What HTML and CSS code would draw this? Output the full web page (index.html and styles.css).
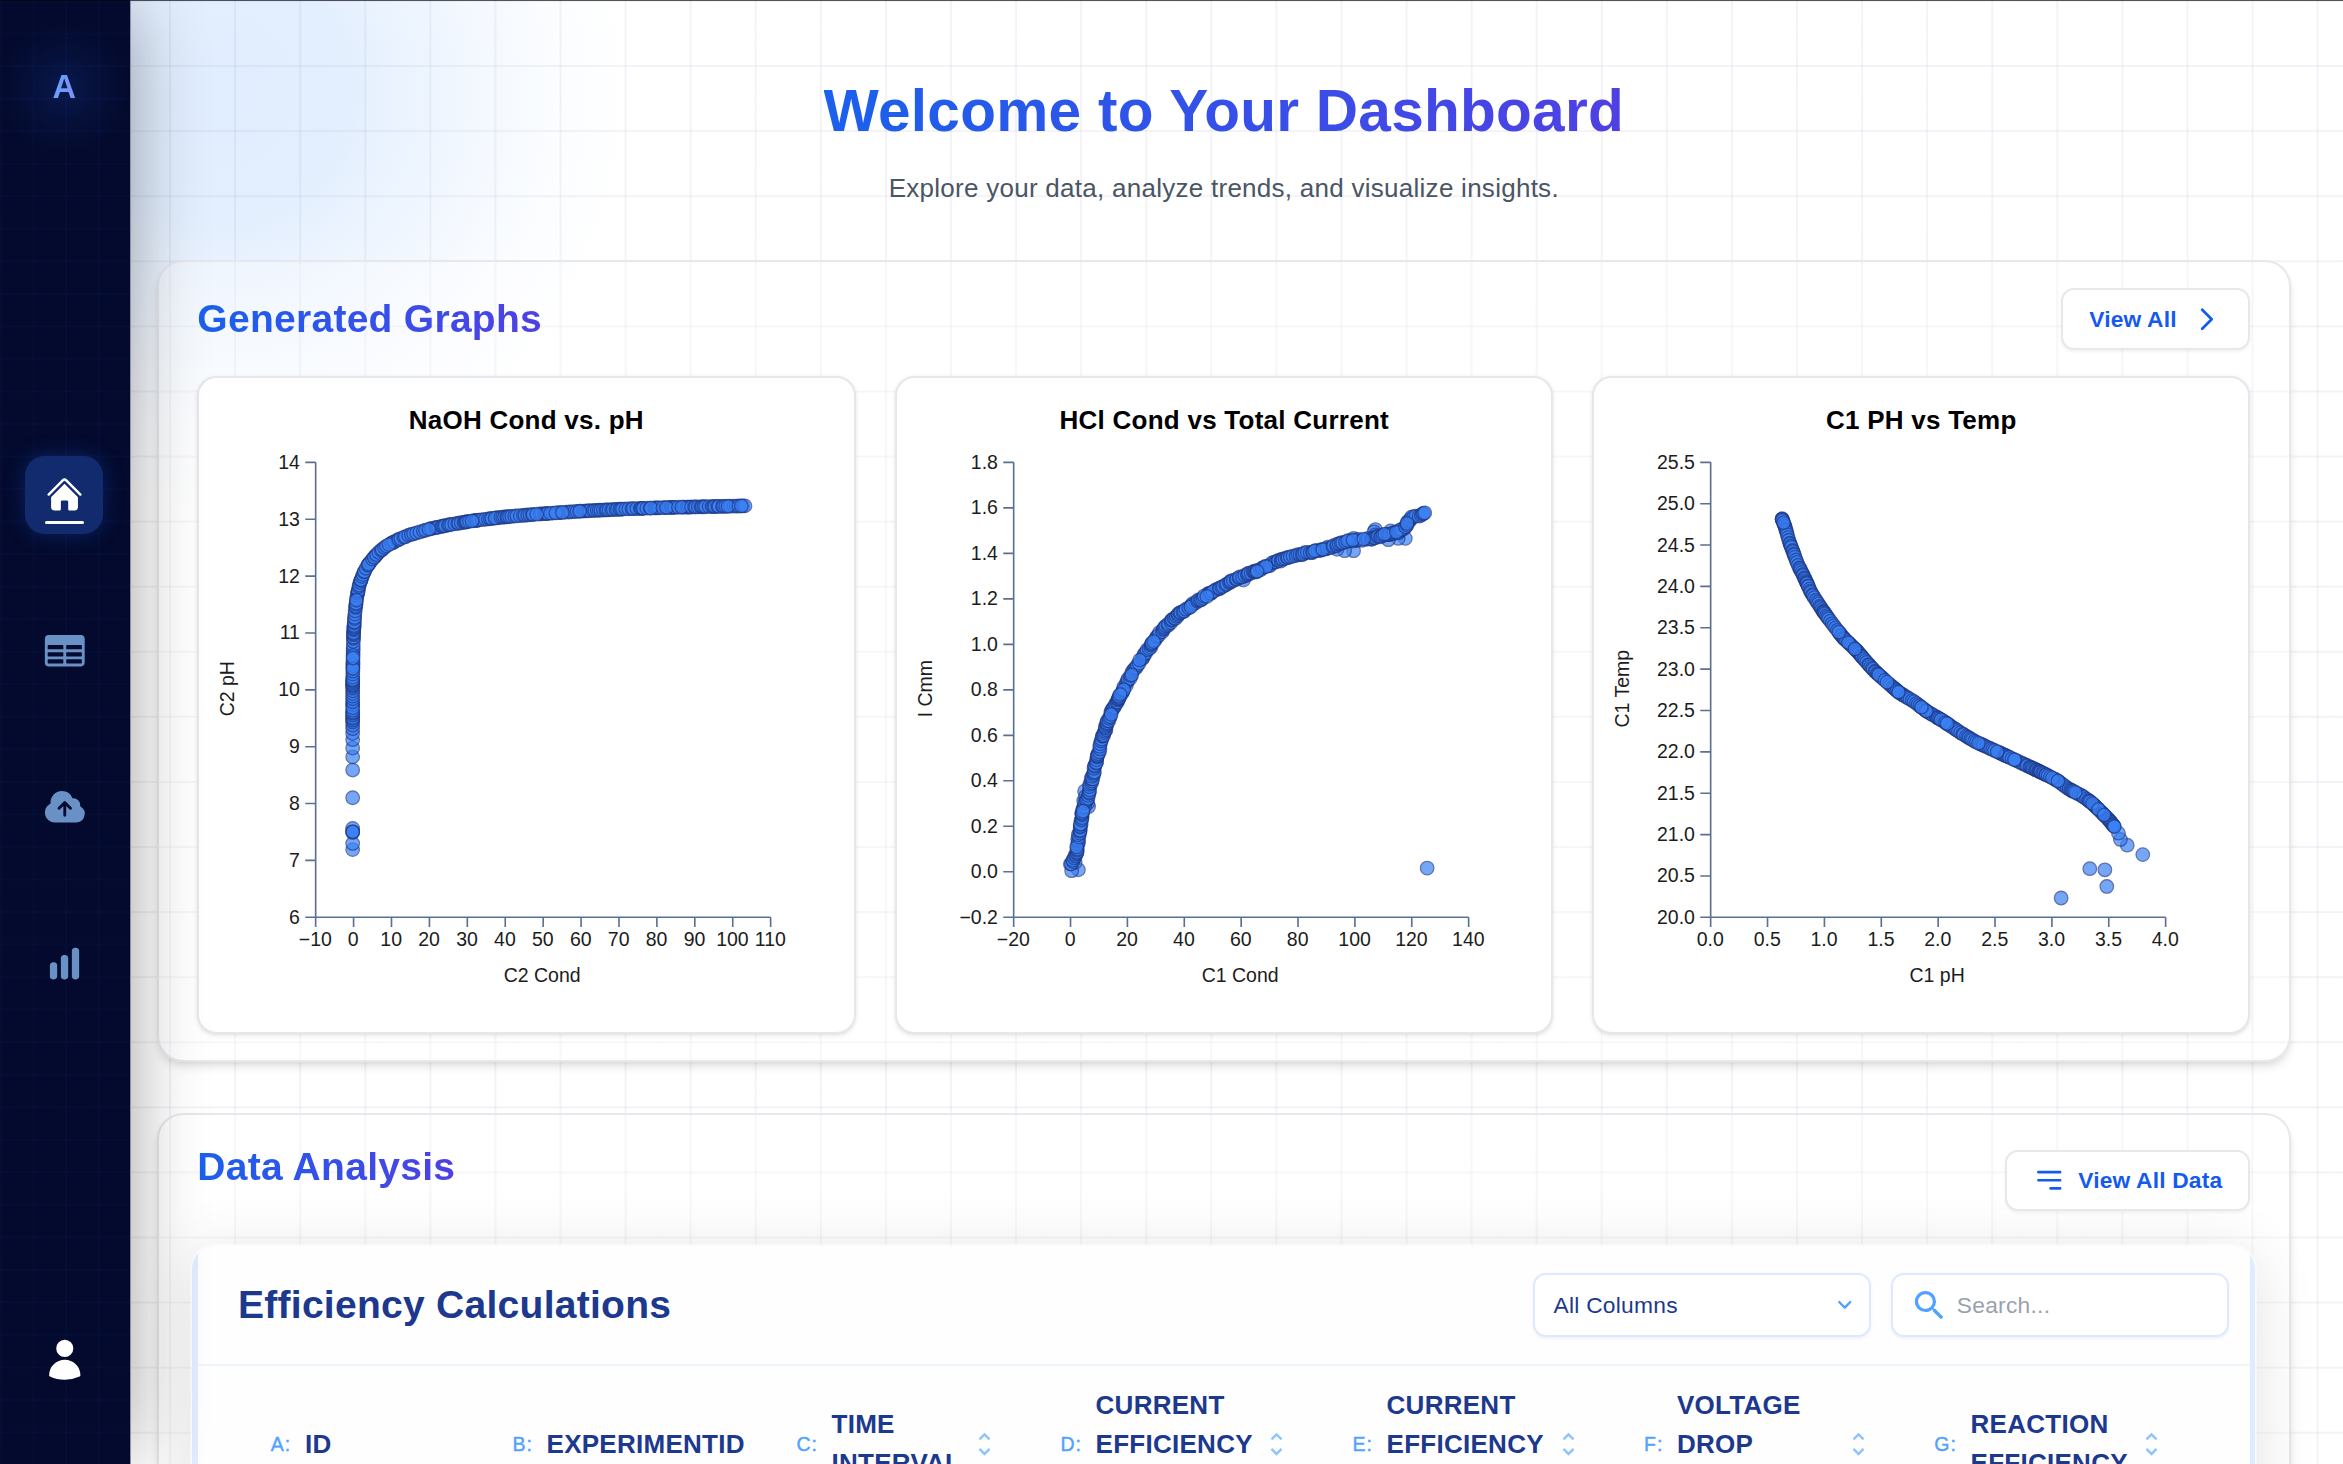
FILE: index.html
```html
<!DOCTYPE html>
<html lang="en">
<head>
<meta charset="utf-8">
<title>Dashboard</title>
<link rel="stylesheet" href="styles.css">
</head>
<body>
<div class="app">
  <aside class="sidebar">
    <div class="logo"><span>A</span></div>
    <nav class="nav">
      <a class="nav-item active">
        <svg width="24" height="24" viewBox="0 0 24 24" fill="currentColor"><path d="M11.47 3.841a.75.75 0 0 1 1.06 0l8.69 8.69a.75.75 0 1 0 1.06-1.061l-8.689-8.69a2.25 2.25 0 0 0-3.182 0l-8.69 8.69a.75.75 0 1 0 1.061 1.06l8.69-8.689Z"/><path d="m12 5.432 8.159 8.159c.03.03.06.058.091.086v6.198c0 1.035-.84 1.875-1.875 1.875H15a.75.75 0 0 1-.75-.75v-4.5a.75.75 0 0 0-.75-.75h-3a.75.75 0 0 0-.75.75V21a.75.75 0 0 1-.75.75H5.625a1.875 1.875 0 0 1-1.875-1.875v-6.198a2.29 2.29 0 0 0 .091-.086L12 5.432Z"/></svg>
      </a>
      <a class="nav-item">
        <svg width="28" height="28" viewBox="0 0 24 24" fill="currentColor"><path fill-rule="evenodd" d="M3.375 3.75h17.25c1.035 0 1.875.84 1.875 1.875v12.75c0 1.035-.84 1.875-1.875 1.875H3.375A1.875 1.875 0 0 1 1.5 18.375V5.625c0-1.036.84-1.875 1.875-1.875ZM3.375 9A.375.375 0 0 0 3 9.375v1.5c0 .207.168.375.375.375h7.5a.375.375 0 0 0 .375-.375v-1.5A.375.375 0 0 0 10.875 9h-7.5Zm9.75 0a.375.375 0 0 0-.375.375v1.5c0 .207.168.375.375.375h7.5a.375.375 0 0 0 .375-.375v-1.5A.375.375 0 0 0 20.625 9h-7.5Zm-9.75 3.75a.375.375 0 0 0-.375.375v1.5c0 .207.168.375.375.375h7.5a.375.375 0 0 0 .375-.375v-1.5a.375.375 0 0 0-.375-.375h-7.5Zm9.75 0a.375.375 0 0 0-.375.375v1.5c0 .207.168.375.375.375h7.5a.375.375 0 0 0 .375-.375v-1.5a.375.375 0 0 0-.375-.375h-7.5Zm-9.75 3.75a.375.375 0 0 0-.375.375v1.5c0 .207.168.375.375.375h7.5a.375.375 0 0 0 .375-.375v-1.5a.375.375 0 0 0-.375-.375h-7.5Zm9.75 0a.375.375 0 0 0-.375.375v1.5c0 .207.168.375.375.375h7.5a.375.375 0 0 0 .375-.375v-1.5a.375.375 0 0 0-.375-.375h-7.5Z"/></svg>
      </a>
      <a class="nav-item">
        <svg width="28" height="28" viewBox="0 0 24 24" fill="currentColor"><path fill-rule="evenodd" d="M10.5 3.75a6 6 0 0 0-5.98 6.496A5.25 5.25 0 0 0 6.75 20.25H18a4.5 4.5 0 0 0 2.206-8.423 3.75 3.75 0 0 0-4.133-4.303A6.001 6.001 0 0 0 10.5 3.75Zm2.03 5.47a.75.75 0 0 0-1.06 0l-3 3a.75.75 0 1 0 1.06 1.06l1.72-1.72v4.94a.75.75 0 0 0 1.5 0v-4.94l1.72 1.72a.75.75 0 1 0 1.06-1.06l-3-3Z"/></svg>
      </a>
      <a class="nav-item">
        <svg width="24" height="24" viewBox="0 0 24 24" fill="currentColor"><path d="M18.375 2.25c-1.035 0-1.875.84-1.875 1.875v15.75c0 1.035.84 1.875 1.875 1.875h.75c1.035 0 1.875-.84 1.875-1.875V4.125c0-1.036-.84-1.875-1.875-1.875h-.75ZM9.75 8.625c0-1.036.84-1.875 1.875-1.875h.75c1.036 0 1.875.84 1.875 1.875v11.25c0 1.035-.84 1.875-1.875 1.875h-.75a1.875 1.875 0 0 1-1.875-1.875V8.625ZM3 13.125c0-1.036.84-1.875 1.875-1.875h.75c1.036 0 1.875.84 1.875 1.875v6.75c0 1.035-.84 1.875-1.875 1.875h-.75A1.875 1.875 0 0 1 3 19.875v-6.75Z"/></svg>
      </a>
    </nav>
    <a class="nav-item profile">
      <svg width="28" height="28" viewBox="0 0 24 24" fill="currentColor"><path d="M7.5 6a4.5 4.5 0 1 1 9 0 4.5 4.5 0 0 1-9 0ZM3.751 20.105a8.25 8.25 0 0 1 16.498 0 .75.75 0 0 1-.437.695A18.683 18.683 0 0 1 12 22.5c-2.786 0-5.433-.608-7.812-1.7a.75.75 0 0 1-.437-.695Z"/></svg>
    </a>
  </aside>

  <main class="main">
    <header class="hero">
      <h1 class="gradient-text">Welcome to Your Dashboard</h1>
      <p>Explore your data, analyze trends, and visualize insights.</p>
    </header>

    <section class="panel">
      <div class="panel-head">
        <h2 class="gradient-text">Generated Graphs</h2>
        <button class="btn">View All
          <svg width="20" height="20" viewBox="0 0 24 24" fill="none" stroke="currentColor" stroke-width="2" stroke-linecap="round" stroke-linejoin="round"><path d="M9 5l7 7-7 7"/></svg>
        </button>
      </div>
      <div class="charts">
        <div class="chart" id="chart-naoh"></div>
        <div class="chart" id="chart-hcl"></div>
        <div class="chart" id="chart-temp"></div>
      </div>
    </section>

    <section class="panel panel-data">
      <div class="panel-head">
        <h2 class="gradient-text">Data Analysis</h2>
        <button class="btn">
          <svg width="20" height="20" viewBox="0 0 24 24" fill="none" stroke="currentColor" stroke-width="2" stroke-linecap="round"><path d="M4 6h16M4 12h16M13 18h7"/></svg>
          View All Data
        </button>
      </div>
      <div class="table-shell">
        <div class="table-card">
          <div class="table-top">
            <h3>Efficiency Calculations</h3>
            <div class="controls">
              <div class="field select"><span>All Columns</span>
                <svg width="12" height="12" viewBox="0 0 12 12" fill="none" stroke="currentColor" stroke-width="1.5" stroke-linecap="round" stroke-linejoin="round"><path d="M2.6 4.3 6 7.7l3.4-3.4"/></svg>
              </div>
              <div class="field search">
                <svg width="24" height="24" viewBox="0 0 24 24" fill="currentColor"><path d="M15.5 14h-.79l-.28-.27A6.471 6.471 0 0 0 16 9.5 6.5 6.5 0 1 0 9.5 16c1.61 0 3.09-.59 4.23-1.57l.27.28v.79l5 4.99L20.49 19l-4.99-5zm-6 0C7.01 14 5 11.99 5 9.5S7.01 5 9.5 5 14 7.01 14 9.5 11.99 14 9.5 14z"/></svg>
                <span>Search...</span>
              </div>
            </div>
          </div>
          <div class="columns">
            <div class="col"><i>A:</i><b>ID</b></div>
            <div class="col"><i>B:</i><b>EXPERIMENTID</b></div>
            <div class="col sortable"><i>C:</i><b>TIME<br>INTERVAL</b><svg class="sort" viewBox="0 0 8 15"><path d="M.9 4.6 4 1.5l3.1 3.1M.9 10.4 4 13.5l3.1-3.1"/></svg></div>
            <div class="col sortable"><i>D:</i><b class="tall">CURRENT<br>EFFICIENCY</b><svg class="sort" viewBox="0 0 8 15"><path d="M.9 4.6 4 1.5l3.1 3.1M.9 10.4 4 13.5l3.1-3.1"/></svg></div>
            <div class="col sortable"><i>E:</i><b class="tall">CURRENT<br>EFFICIENCY</b><svg class="sort" viewBox="0 0 8 15"><path d="M.9 4.6 4 1.5l3.1 3.1M.9 10.4 4 13.5l3.1-3.1"/></svg></div>
            <div class="col sortable"><i>F:</i><b class="tall">VOLTAGE<br>DROP</b><svg class="sort" viewBox="0 0 8 15"><path d="M.9 4.6 4 1.5l3.1 3.1M.9 10.4 4 13.5l3.1-3.1"/></svg></div>
            <div class="col sortable"><i>G:</i><b>REACTION<br>EFFICIENCY</b><svg class="sort" viewBox="0 0 8 15"><path d="M.9 4.6 4 1.5l3.1 3.1M.9 10.4 4 13.5l3.1-3.1"/></svg></div>
          </div>
        </div>
      </div>
    </section>
  </main>
</div>
<script src="charts.js"></script>
</body>
</html>
```
FILE: styles.css
```css
* { box-sizing: border-box; }

html { background: #fff; overflow: hidden; }

body {
  margin: 0;
  zoom: 1.627083;
  overflow: hidden;
  font-family: "Liberation Sans", Arial, sans-serif;
  letter-spacing: 0.01em;
  color: #000;
}

h1, h2, h3, p { margin: 0; }

.app {
  position: relative;
  display: flex;
  width: 1440px;
  height: 900px;
  overflow: hidden;
}

.app::after {
  content: "";
  position: absolute;
  inset: 0 0 auto 0;
  height: 0.62px;
  background: rgba(0, 0, 0, 0.65);
  z-index: 5;
}

/* Sidebar */
.sidebar {
  position: relative;
  z-index: 1;
  flex: none;
  display: flex;
  flex-direction: column;
  align-items: center;
  width: 80.3px;
  height: 900px;
  padding: 0 0.6px 36px 0;
  border-right: 1px solid #8d93a8;
  background-color: #030a2d;
  background-image:
    linear-gradient(to right, rgba(30, 64, 175, 0.06) 1px, transparent 1px),
    linear-gradient(to bottom, rgba(30, 64, 175, 0.06) 1px, transparent 1px);
  background-size: 20px 20px;
  box-shadow: 0 0 50px -6px rgba(0, 0, 0, 0.45);
}

.logo {
  display: flex;
  align-items: center;
  justify-content: center;
  width: 78px;
  height: 108px;
  font-size: 20px;
  font-weight: 700;
  line-height: 28px;
  background: radial-gradient(circle 40px, rgba(37, 99, 235, 0.17), rgba(37, 99, 235, 0.07) 50%, rgba(37, 99, 235, 0) 100%);
}

.logo span {
  background: linear-gradient(to right, #60a5fa, #818cf8);
  -webkit-background-clip: text;
  background-clip: text;
  color: transparent;
}

.nav {
  display: flex;
  flex-direction: column;
  gap: 48px;
  margin-top: 172px;
}

.nav-item {
  position: relative;
  display: flex;
  align-items: center;
  justify-content: center;
  width: 48px;
  height: 48px;
  border-radius: 12px;
  color: #6a91c6;
}

.nav-item.active {
  color: #fff;
  background: #122a6e;
  box-shadow: 0 0 14px rgba(37, 99, 235, 0.28);
}

.nav-item.active::after {
  content: "";
  position: absolute;
  left: 12px;
  bottom: 6px;
  width: 24px;
  height: 2px;
  border-radius: 2px;
  background: #fff;
}

.profile { margin-top: auto; margin-bottom: 4px; color: #fff; }

/* Main area */
.main {
  flex: none;
  width: 1360px;
  height: 900px;
  margin-left: -0.3px;
  padding: 48px 32px 0 16.3px;
  overflow: hidden;
  background-image:
    linear-gradient(to right, rgba(30, 30, 110, 0.05) 1px, transparent 1px),
    linear-gradient(to bottom, rgba(30, 30, 110, 0.05) 1px, transparent 1px),
    radial-gradient(circle 260px at 52px 56px, rgba(219, 234, 254, 0.85), rgba(219, 234, 254, 0.78) 30%, rgba(219, 234, 254, 0.38) 58%, rgba(219, 234, 254, 0.1) 82%, rgba(219, 234, 254, 0));
  background-size: 40px 40px, 40px 40px, 100% 100%;
  background-position: 24px 0, 0 0, 0 0;
}

.gradient-text {
  width: fit-content;
  background: linear-gradient(to right, #1b60ec, #4f40e4);
  -webkit-background-clip: text;
  background-clip: text;
  color: transparent;
}

.hero {
  display: flex;
  flex-direction: column;
  align-items: center;
  gap: 16px;
  margin-bottom: 32px;
}

.hero h1 { font-size: 36px; line-height: 40px; font-weight: 700; }
.hero p { font-size: 16px; line-height: 24px; color: #4a5565; }

.panel {
  padding: 16px 23.75px 15.6px;
  border: 1.25px solid #e7e8ec;
  border-radius: 16px;
  background: rgba(255, 255, 255, 0.3);
  box-shadow: 0 4px 6px -1px rgba(0, 0, 0, 0.1), 0 2px 4px -2px rgba(0, 0, 0, 0.1);
}

.panel-head {
  display: flex;
  align-items: center;
  justify-content: space-between;
  margin-bottom: 15.9px;
}

.panel h2 { font-size: 24px; line-height: 32px; font-weight: 700; }

.btn {
  display: flex;
  align-items: center;
  gap: 8px;
  height: 38px;
  padding: 0 16px;
  border: 1.25px solid #e7e8ec;
  border-radius: 8px;
  background: #fff;
  box-shadow: 0 1px 2px rgba(0, 0, 0, 0.05);
  color: #155aef;
  font: 700 14px/20px "Liberation Sans", Arial, sans-serif;
  letter-spacing: 0.008em;
}

.charts {
  display: grid;
  grid-template-columns: repeat(3, 1fr);
  gap: 24px;
}

.chart {
  aspect-ratio: 1;
  border: 1.25px solid #e5e7eb;
  border-radius: 12px;
  background: #fff;
  box-shadow: 0 1px 3px rgba(0, 0, 0, 0.08), 0 1px 2px -1px rgba(0, 0, 0, 0.08);
}

.chart svg { display: block; width: 100%; height: 100%; }
.chart-title { font-size: 16px; font-weight: 700; text-anchor: middle; }
.chart-label { font-size: 12px; fill: #1c1c1c; letter-spacing: 0; }
.chart-axis { fill: none; stroke: #5b7090; stroke-width: 1; }
.chart-dot { fill: #3b82f6; stroke: #1e3a8a; stroke-width: 0.8; opacity: 0.7; }

/* Data panel */
.panel-data {
  height: 320px;
  margin-top: 31.8px;
}

.panel-data .panel-head { align-items: flex-start; margin-bottom: 21.2px; }
.panel-data .btn { margin-top: 5px; }

.table-shell {
  height: 300px;
  margin: 0 -3px 0 -3.5px;
  padding: 0 3px 0 3.7px;
  border-radius: 14px;
  background: #dfebfe;
  box-shadow: 0 0 0 1px rgba(255, 255, 255, 0.7), 0 6px 40px rgba(0, 0, 0, 0.12);
  overflow: hidden;
}

.table-card { height: 100%; background: #fefefe; }

.table-top {
  display: flex;
  align-items: center;
  justify-content: space-between;
  height: 74px;
  padding: 0 13px 0 24.8px;
  border-bottom: 1.25px solid #eff5ff;
}

.table-top h3 {
  font-size: 24px;
  line-height: 32px;
  font-weight: 700;
  color: #1c398e;
}

.controls { display: flex; gap: 12.5px; }

.field {
  display: flex;
  align-items: center;
  width: 207.8px;
  height: 39.5px;
  padding: 0 12px;
  border: 1.25px solid #dbeafe;
  border-radius: 8px;
  background: #fff;
  box-shadow: 0 1px 2px rgba(0, 0, 0, 0.05);
  font-size: 14px;
  color: #1c398e;
}

.field svg { color: #51a2ff; }
.select { justify-content: space-between; padding-left: 11.6px; padding-right: 8.5px; }
.search { gap: 4.6px; padding-left: 10.6px; color: #99a1af; }

.columns {
  display: grid;
  grid-template-columns: 148.5px 174.5px 162.3px 179.5px 179.2px 178.4px 179.8px;
  padding: 12px 0 0 45px;
}

.col {
  display: flex;
  align-items: center;
  height: 72px;
}

.col.sortable { padding-right: 42.5px; }

.col i {
  margin-right: 8.4px;
  font-size: 12px;
  font-style: normal;
  letter-spacing: 0.05em;
  color: #51a2ff;
  -webkit-text-stroke: 0.25px #51a2ff;
}

.col b {
  font-size: 16px;
  line-height: 24px;
  color: #1c398e;
}

.col .tall { align-self: flex-start; }

.sort {
  width: 8px;
  height: 15px;
  margin-left: auto;
  fill: none;
  stroke: #8ec5ff;
  stroke-width: 1.5;
}
```
FILE: charts.js
```js
// Scatter charts. Each trace is sampled on its own grid, which maps onto the plot area.
const PLOT = { left: 71.8, top: 51.9, size: 280 };

const charts = [
  {
    id: 'chart-naoh', title: 'NaOH Cond vs. pH', xTitle: 'C2 Cond', yTitle: 'C2 pH',
    x: { min: -10, max: 110, step: 10, digits: 0 },
    y: { min: 6, max: 14, step: 1, digits: 0 },
    grid: [1020, 1035],
    singles: [[83, 881], [83, 867], [83, 833], [83, 841], [83, 842], [83, 840], [83, 763], [83, 700], [83, 670], [83, 650], [83, 631], [83, 617], [83, 606]],
    trace: [[83, 598], [83, 500], [84, 428], [85, 388], [88, 343], [92, 308], [98, 278], [107, 253], [115, 237], [125, 223], [141, 205], [159, 190], [183, 177], [208, 166], [258, 151], [300, 142], [346, 134], [416, 125], [496, 118], [596, 111], [696, 106], [796, 102.5], [896, 100.5], [966, 99]],
    step: 5
  },
  {
    id: 'chart-hcl', title: 'HCl Cond vs Total Current', xTitle: 'C1 Cond', yTitle: 'I Cmm',
    x: { min: -20, max: 140, step: 20, digits: 0 },
    y: { min: -0.2, max: 1.8, step: 0.2, digits: 1 },
    grid: [1020, 1035],
    singles: [[927, 923], [145, 927], [130, 929], [138, 910], [127, 914], [762, 201], [742, 201], [725, 198], [811, 153], [808, 158], [762, 173], [878, 173], [862, 173], [857, 158], [845, 156], [840, 176], [812, 165], [515, 268], [168, 783], [166, 775], [159, 748], [157, 770], [155, 790], [153, 800], [161, 760]],
    trace: [[130, 914], [134, 906], [138, 898], [142, 880], [145, 858], [149, 828], [153, 803], [159, 780], [165, 765], [172, 733], [178, 711], [186, 680], [192, 652], [199, 628], [210, 593], [221, 563], [235, 538], [248, 513], [262, 486], [275, 463], [292, 440], [305, 421], [323, 396], [339, 375], [357, 358], [377, 340], [412, 316], [445, 295], [467, 283], [510, 260], [552, 245], [585, 228], [622, 215], [657, 206], [687, 200], [722, 189], [752, 179], [807, 173], [832, 165], [862, 159], [878, 146], [890, 126], [912, 120], [927, 115]],
    step: 4.2,
    scatter: 3
  },
  {
    id: 'chart-temp', title: 'C1 PH vs Temp', xTitle: 'C1 pH', yTitle: 'C1 Temp',
    x: { min: 0, max: 4, step: 0.5, digits: 1 },
    y: { min: 20, max: 25.5, step: 0.5, digits: 1 },
    grid: [936, 871],
    singles: [[857, 733], [889, 751], [780, 778], [811, 780], [815, 812], [721, 834], [843, 722], [839, 710], [147, 108], [147, 109], [149, 112]],
    trace: [[147, 109], [153, 123], [161, 150], [169, 170], [179, 195], [191, 217], [207, 250], [230, 283], [251, 310], [273, 336], [301, 361], [323, 385], [339, 401], [363, 421], [388, 441], [420, 459], [445, 477], [478, 495], [513, 517], [545, 535], [573, 547], [599, 558], [638, 575], [668, 588], [690, 598], [713, 609], [736, 625], [763, 638], [783, 651], [801, 667], [820, 685], [831, 698]],
    step: 3.8
  }
];

function randomizer(seed) {
  let s = seed;
  return () => {
    s = (s * 1664525 + 1013904223) % 4294967296;
    return s / 4294967296;
  };
}

function sampleTrace(trace, step, scatter, rand) {
  const out = [];
  let next = 0;
  let run = 0;
  for (let i = 1; i < trace.length; i++) {
    const [x0, y0] = trace[i - 1];
    const [x1, y1] = trace[i];
    const len = Math.hypot(x1 - x0, y1 - y0);
    while (next <= run + len) {
      const t = (next - run) / len;
      const off = scatter * (rand() - 0.5);
      out.push([x0 + (x1 - x0) * t + off, y0 + (y1 - y0) * t + off]);
      next += step * (0.35 + 1.3 * rand());
    }
    run += len;
  }
  return out
    .map((p, i) => ({ p, key: i + (rand() < 0.1 ? 18 * rand() : 0) }))
    .sort((a, b) => a.key - b.key)
    .map(o => o.p);
}

const fmt = (v, digits) => v.toFixed(digits).replace(/^-(?=0\.?0*$)/, '').replace('-', '\u2212');

charts.forEach((c, n) => {
  const { left, top, size } = PLOT;
  const bottom = top + size;
  const right = left + size;
  const mid = left + size / 2;
  const parts = [];

  parts.push(`<text class="chart-title" x="201.4" y="31.4">${c.title}</text>`);

  const xCount = Math.round((c.x.max - c.x.min) / c.x.step);
  const yCount = Math.round((c.y.max - c.y.min) / c.y.step);
  let axis = `M${left} ${top}V${bottom}H${right}`;
  for (let i = 0; i <= xCount; i++) {
    const x = left + (size * i) / xCount;
    axis += `M${x} ${bottom}v6`;
    parts.push(`<text class="chart-label" text-anchor="middle" x="${x - 0.2}" y="${bottom + 17.4}">${fmt(c.x.min + i * c.x.step, c.x.digits)}</text>`);
  }
  for (let i = 0; i <= yCount; i++) {
    const y = bottom - (size * i) / yCount;
    axis += `M${left} ${y}h-6.4`;
    parts.push(`<text class="chart-label" text-anchor="end" x="${left - 9.7}" y="${y + 4}">${fmt(c.y.min + i * c.y.step, c.y.digits)}</text>`);
  }
  parts.push(`<path class="chart-axis" d="${axis}"/>`);
  parts.push(`<text class="chart-label" text-anchor="middle" x="${mid - 0.6}" y="371.5">${c.xTitle}</text>`);
  parts.push(`<text class="chart-label" text-anchor="middle" transform="translate(21.6 191.2) rotate(-90)">${c.yTitle}</text>`);

  const rand = randomizer(17 + n * 101);
  const points = c.singles.concat(sampleTrace(c.trace, c.step, c.scatter || 0, rand));
  points.forEach(([gx, gy]) => {
    const x = left + (gx / c.grid[0]) * size;
    const y = top + (gy / c.grid[1]) * size;
    parts.push(`<circle class="chart-dot" cx="${x.toFixed(2)}" cy="${y.toFixed(2)}" r="4.15"/>`);
  });

  document.getElementById(c.id).innerHTML = `<svg viewBox="0 0 402.67 402.67">${parts.join('')}</svg>`;
});
```
